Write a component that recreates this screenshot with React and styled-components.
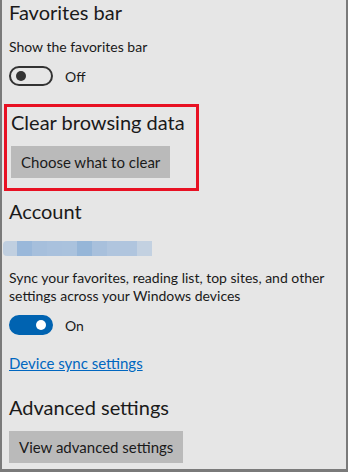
import React from 'react'
import styled, { createGlobalStyle } from 'styled-components'

const GlobalStyle = createGlobalStyle`
  html, body {
    margin: 0;
    padding: 0;
    background: #e6e6e6;
  }
  body {
    font-family: 'Lato', 'Noto Sans', sans-serif;
    color: #1a1a1a;
  }
`

// Styled Components
const Frame = styled.div`
  width: 348px;
  height: 472px;
  box-sizing: border-box;
  background: #e6e6e6;
  border-left: 2px solid #7a7a7a;
  border-right: 2px solid #7a7a7a;
  border-bottom: 3px solid #7a7a7a;
  padding-left: 7px;
  overflow: hidden;
`

const Heading = styled.h2`
  margin: ${p => p.$top || 0}px 0 0;
  font-size: 20px;
  font-weight: 400;
  line-height: 24px;
  white-space: nowrap;
  color: #1a1a1a;
`

const Label = styled.p`
  margin: ${p => p.$top || 0}px 0 0;
  font-size: 14px;
  line-height: ${p => p.$lh || 20}px;
  max-width: 330px;
`

const ToggleRow = styled.div`
  display: flex;
  align-items: center;
  gap: 12px;
  margin-top: ${p => p.$top || 0}px;
  font-size: 14px;
  height: 20px;
`

const Track = styled.span`
  width: 44px;
  height: 20px;
  box-sizing: border-box;
  border-radius: 10px;
  display: flex;
  align-items: center;
  padding: 0 5px;
  justify-content: ${p => (p.$on ? 'flex-end' : 'flex-start')};
  background: ${p => (p.$on ? '#0063b1' : 'transparent')};
  border: 2px solid ${p => (p.$on ? '#0063b1' : '#333')};
`

const Knob = styled.span`
  width: 10px;
  height: 10px;
  border-radius: 50%;
  background: ${p => (p.$on ? '#fff' : '#333')};
`

const Highlight = styled.section`
  margin: 18px 0 0 -5px;
  width: 195px;
  box-sizing: border-box;
  border: 3px solid #e81123;
  padding: 3px 0 10px 4px;
`

const Button = styled.button`
  display: block;
  margin-top: 12px;
  height: 32px;
  padding: 0 10px;
  border: none;
  background: #bababa;
  color: #1a1a1a;
  font-family: inherit;
  font-size: 15px;
`

const Blurred = styled.div`
  margin: 18px 0 0 -6px;
  display: flex;
  height: 15px;
`

const Cell = styled.span`
  width: 15px;
  height: 15px;
  background: ${p => p.$c};
  &:first-child {
    width: 14px;
    border-radius: 4px 0 0 4px;
  }
`

const Link = styled.a`
  display: inline-block;
  margin-top: 18px;
  font-size: 15px;
  line-height: 20px;
  color: #0067c0;
  text-decoration: underline;
`

const blur = ['#c0cfe0', '#9ab8da', '#a6bfdc', '#a9c1dd', '#aac2dd', '#96b6d8', '#a8c0dc', '#b0c5de', '#b0c5de', '#c3d1e1']

const Toggle = ({ on }) => (
  <Track $on={on}>
    <Knob $on={on} />
  </Track>
)

const App = () => (
  <Frame>
    <GlobalStyle />

    <Heading>Favorites bar</Heading>
    <Label $top={13}>Show the favorites bar</Label>
    <ToggleRow $top={9}>
      <Toggle />
      <span>Off</span>
    </ToggleRow>

    <Highlight>
      <Heading>Clear browsing data</Heading>
      <Button>Choose what to clear</Button>
    </Highlight>

    <Heading $top={8}>Account</Heading>
    <Blurred>
      {blur.map((c, i) => <Cell key={i} $c={c} />)}
    </Blurred>
    <Label $top={13} $lh={18}>
      Sync your favorites, reading list, top sites, and other settings across your Windows devices
    </Label>
    <ToggleRow $top={10}>
      <Toggle on />
      <span>On</span>
    </ToggleRow>
    <Link href="#">Device sync settings</Link>

    <Heading $top={22}>Advanced settings</Heading>
    <Button>View advanced settings</Button>
  </Frame>
)

export default App
